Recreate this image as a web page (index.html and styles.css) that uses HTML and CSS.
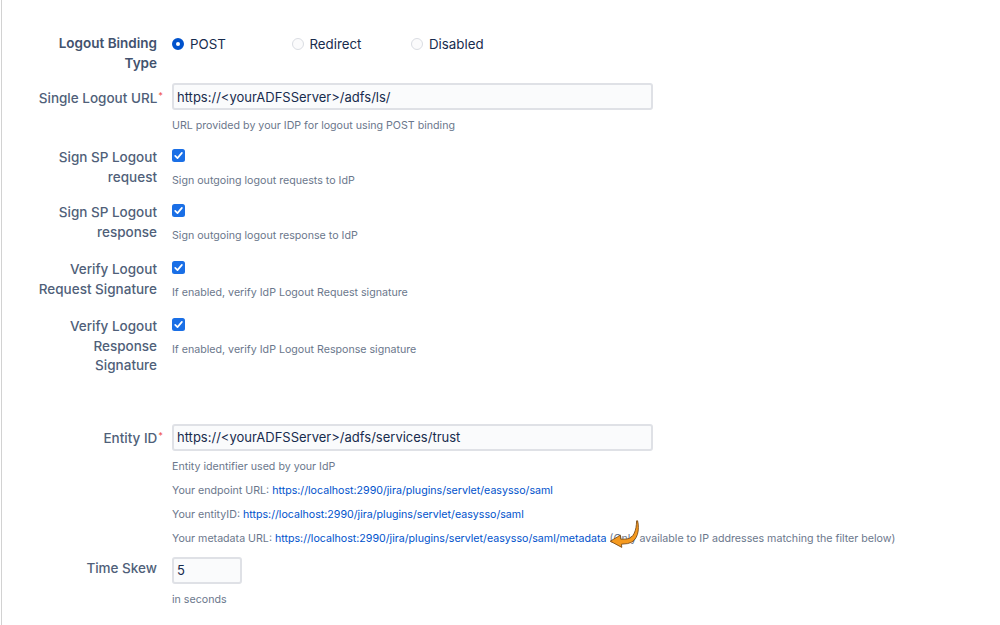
FILE: index.html
```html
<!DOCTYPE html>
<html>
<head>
<meta charset="utf-8">
<link rel="stylesheet" href="styles.css">
</head>
<body>
<div class="page">
  <div class="row row-first">
    <div class="label strong">Logout Binding Type</div>
    <div class="field radios">
      <label class="radio"><span class="dot checked"></span>POST</label>
      <label class="radio"><span class="dot"></span>Redirect</label>
      <label class="radio"><span class="dot"></span>Disabled</label>
    </div>
  </div>

  <div class="row row-input gap-10">
    <div class="label">Single Logout URL<span class="req">*</span></div>
    <div class="field">
      <input class="text wide" type="text" value="https://&lt;yourADFSServer&gt;/adfs/ls/">
      <div class="help">URL provided by your IDP for logout using POST binding</div>
    </div>
  </div>

  <div class="row gap-14">
    <div class="label">Sign SP Logout request</div>
    <div class="field">
      <span class="check"><svg viewBox="0 0 13 13" width="13" height="13"><rect x="0" y="0" width="13" height="13" rx="2.5" fill="#1a6fe6"/><path d="M3.2 6.8 L5.5 9.1 L9.9 3.9" fill="none" stroke="#fff" stroke-width="1.7" stroke-linecap="round" stroke-linejoin="round"/></svg></span>
      <div class="help">Sign outgoing logout requests to IdP</div>
    </div>
  </div>

  <div class="row gap-14">
    <div class="label">Sign SP Logout response</div>
    <div class="field">
      <span class="check"><svg viewBox="0 0 13 13" width="13" height="13"><rect x="0" y="0" width="13" height="13" rx="2.5" fill="#1a6fe6"/><path d="M3.2 6.8 L5.5 9.1 L9.9 3.9" fill="none" stroke="#fff" stroke-width="1.7" stroke-linecap="round" stroke-linejoin="round"/></svg></span>
      <div class="help">Sign outgoing logout response to IdP</div>
    </div>
  </div>

  <div class="row gap-16">
    <div class="label">Verify Logout Request Signature</div>
    <div class="field">
      <span class="check"><svg viewBox="0 0 13 13" width="13" height="13"><rect x="0" y="0" width="13" height="13" rx="2.5" fill="#1a6fe6"/><path d="M3.2 6.8 L5.5 9.1 L9.9 3.9" fill="none" stroke="#fff" stroke-width="1.7" stroke-linecap="round" stroke-linejoin="round"/></svg></span>
      <div class="help">If enabled, verify IdP Logout Request signature</div>
    </div>
  </div>

  <div class="row gap-16">
    <div class="label">Verify Logout Response Signature</div>
    <div class="field">
      <span class="check"><svg viewBox="0 0 13 13" width="13" height="13"><rect x="0" y="0" width="13" height="13" rx="2.5" fill="#1a6fe6"/><path d="M3.2 6.8 L5.5 9.1 L9.9 3.9" fill="none" stroke="#fff" stroke-width="1.7" stroke-linecap="round" stroke-linejoin="round"/></svg></span>
      <div class="help">If enabled, verify IdP Logout Response signature</div>
    </div>
  </div>

  <div class="row row-input gap-48">
    <div class="label">Entity ID<span class="req">*</span></div>
    <div class="field">
      <input class="text wide" type="text" value="https://&lt;yourADFSServer&gt;/adfs/services/trust">
      <div class="help">Entity identifier used by your IdP</div>
      <div class="help">Your endpoint URL: <a href="#">https://localhost:2990/jira/plugins/servlet/easysso/saml</a></div>
      <div class="help">Your entityID: <a href="#">https://localhost:2990/jira/plugins/servlet/easysso/saml</a></div>
      <div class="help">Your metadata URL: <a href="#">https://localhost:2990/jira/plugins/servlet/easysso/saml/metadata</a><span class="arrow-anchor"><svg class="arrow" viewBox="0 0 32 28" width="32" height="28"><path d="M28.6 0.8 C30.6 9 29.4 21.6 18.6 23.6 L12.4 24.2 L12.8 27.4 L1.2 21.2 L11.4 15.2 L11.8 19.2 L17.6 19 C24.6 18.4 27.4 10.6 27.6 0.8 Z" fill="#f59a1f" stroke="#6e3f0c" stroke-width="0.8" stroke-linejoin="round"/></svg></span> (Only available to IP addresses matching the filter below)</div>
    </div>
  </div>

  <div class="row row-input gap-10">
    <div class="label">Time Skew</div>
    <div class="field">
      <input class="text short" type="text" value="5">
      <div class="help">in seconds</div>
    </div>
  </div>
</div>
</body>
</html>
```

FILE: styles.css
```css
html, body {
  margin: 0;
  padding: 0;
  background: #ffffff;
}

body {
  font-family: Inter, "Noto Sans", "Liberation Sans", sans-serif;
  color: #172b4d;
}

.page {
  margin-left: 1px;
  border-left: 1px solid #d2d2d2;
  min-height: 625px;
  box-sizing: border-box;
  padding-top: 34px;
  overflow: hidden;
}

.row {
  display: grid;
  grid-template-columns: 125px 1fr;
  column-gap: 15px;
  margin-left: 30px;
}

.gap-10 { margin-top: 10px; }
.gap-14 { margin-top: 14px; }
.gap-16 { margin-top: 16px; }
.gap-48 { margin-top: 48px; }

.label {
  text-align: right;
  font-size: 13.5px;
  line-height: 19.5px;
  font-weight: 500;
  color: #505f79;
}

.label.strong {
  font-weight: 600;
  color: #42526e;
}

.row-input .label {
  padding-top: 2.5px;
}

.req {
  color: #ef5c5c;
  font-size: 9px;
  vertical-align: 4px;
  margin-left: 1px;
  margin-right: -6px;
}

.field {
  display: flex;
  flex-direction: column;
  align-items: flex-start;
}

.radios {
  flex-direction: row;
  align-items: center;
  height: 19.5px;
}

.radio {
  width: 119.5px;
  display: flex;
  align-items: center;
  font-size: 13.3px;
  color: #172b4d;
}

.dot {
  width: 12px;
  height: 12px;
  box-sizing: border-box;
  border-radius: 50%;
  border: 1.5px solid #dadde3;
  background: #fbfbfc;
  margin-right: 6px;
  flex: none;
}

.dot.checked {
  background: #0052cc;
  border: 4px solid #0052cc;
  position: relative;
}

.dot.checked::after {
  content: "";
  position: absolute;
  left: 0;
  top: 0;
  width: 4px;
  height: 4px;
  border-radius: 50%;
  background: #ffffff;
}

.text {
  box-sizing: border-box;
  height: 27px;
  border: 2px solid #dfe1e6;
  border-radius: 3px;
  background: #fafbfc;
  font-family: inherit;
  font-size: 13px;
  color: #172b4d;
  padding: 0 3px;
  margin: 0;
  outline: none;
}

.text.wide { width: 481px; }
.text.short { width: 70px; }

.check {
  display: block;
  width: 13px;
  height: 13px;
  margin-top: 1px;
}

.check svg {
  display: block;
}

.help {
  font-size: 10.65px;
  line-height: 16px;
  color: #6b778c;
  margin-top: 8px;
  white-space: nowrap;
}

.check + .help {
  margin-top: 11px;
}

.help a {
  color: #0052cc;
  text-decoration: none;
}

.arrow-anchor {
  position: relative;
  display: inline-block;
  width: 0;
  height: 0;
}

.arrow {
  position: absolute;
  left: 2px;
  top: -22px;
}
```
